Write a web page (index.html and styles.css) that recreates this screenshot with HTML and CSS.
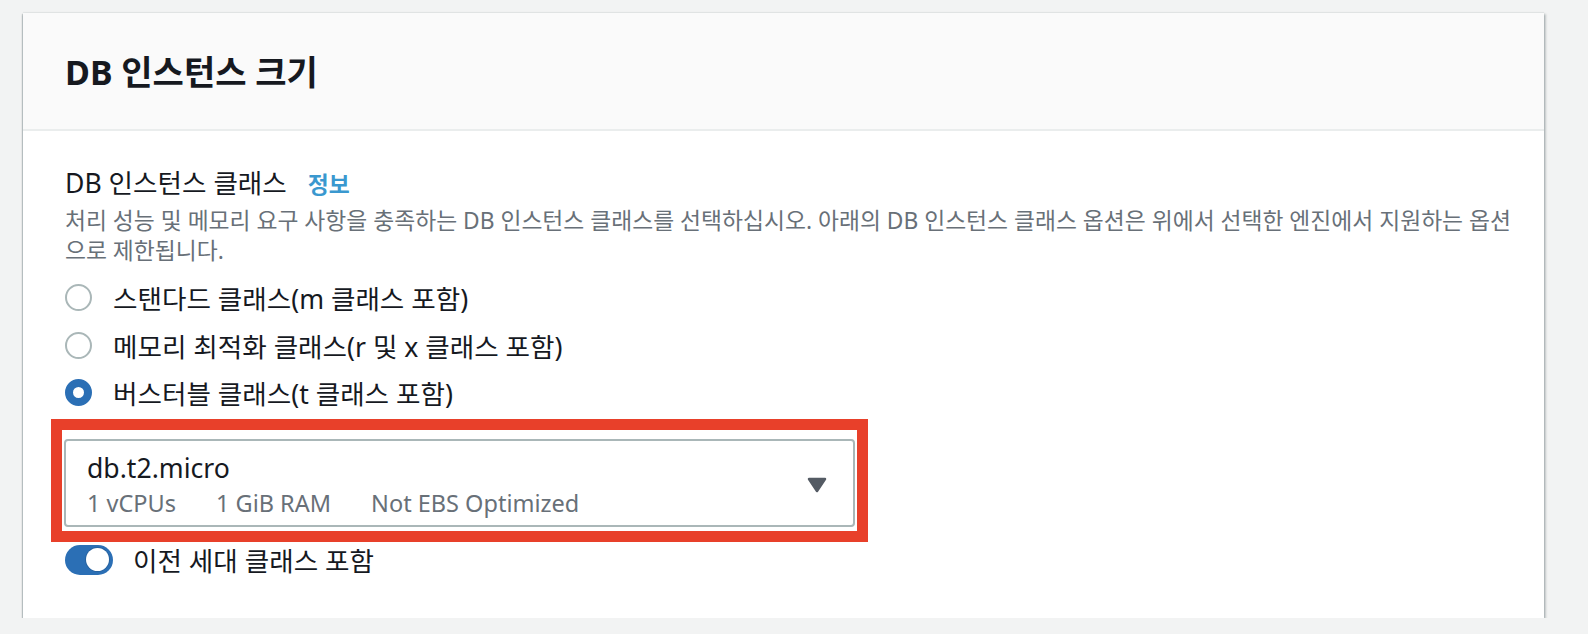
FILE: index.html
```html
<!DOCTYPE html>
<html lang="ko">
<head>
<meta charset="utf-8">
<title>DB 인스턴스 크기</title>
<link rel="stylesheet" href="styles.css">
</head>
<body>
<section class="card">
  <header class="card-header">
    <h2 class="card-title">DB 인스턴스 크기</h2>
  </header>
  <div class="card-body">
    <div class="field-label">
      <span class="label-text">DB 인스턴스 클래스</span>
      <a class="info-link">정보</a>
    </div>
    <p class="field-desc">처리 성능 및 메모리 요구 사항을 충족하는 DB 인스턴스 클래스를 선택하십시오. 아래의 DB 인스턴스 클래스 옵션은 위에서 선택한 엔진에서 지원하는 옵션<br>으로 제한됩니다.</p>
    <div class="radio-group">
      <label class="radio-row"><span class="radio"></span><span class="radio-label">스탠다드 클래스(m 클래스 포함)</span></label>
      <label class="radio-row"><span class="radio"></span><span class="radio-label">메모리 최적화 클래스(r 및 x 클래스 포함)</span></label>
      <label class="radio-row"><span class="radio radio-checked"></span><span class="radio-label">버스터블 클래스(t 클래스 포함)</span></label>
    </div>
    <div class="highlight">
      <div class="select">
        <div class="select-text">
          <div class="select-value">db.t2.micro</div>
          <div class="select-tags">
            <span>1 vCPUs</span>
            <span>1 GiB RAM</span>
            <span>Not EBS Optimized</span>
          </div>
        </div>
        <svg class="caret" width="20" height="16" viewBox="0 0 20 16"><path d="M2 2 H18 L10 14 Z" fill="#545b64" stroke="#545b64" stroke-width="2.5" stroke-linejoin="round"/></svg>
      </div>
    </div>
    <div class="toggle-row">
      <span class="toggle"><span class="knob"></span></span>
      <span class="toggle-label">이전 세대 클래스 포함</span>
    </div>
  </div>
</section>
</body>
</html>
```
FILE: styles.css
```css
html, body {
  margin: 0;
  padding: 0;
}
body {
  background: #f2f3f3;
  padding: 13px 0 0 23px;
  font-family: "Noto Sans", "Noto Sans CJK KR", sans-serif;
  color: #16191f;
}
.card {
  width: 1521px;
  height: 605px;
  background: #ffffff;
  box-shadow: 0 2px 2px 0 rgba(0, 28, 36, 0.35), 2px 1px 2px 0 rgba(0, 28, 36, 0.18), -1px 1px 1px 0 rgba(0, 28, 36, 0.15), 0 -1px 1px 0 rgba(0, 28, 36, 0.06);
}
.card-header {
  background: #fafafa;
  border-bottom: 2px solid #eaeded;
  display: flex;
  align-items: center;
  padding: 2px 42px 0 42px;
  box-sizing: border-box;
  height: 118px;
}
.card-title {
  margin: 0;
  font-size: 34px;
  font-weight: 700;
  line-height: 40px;
}
.card-body {
  padding: 35px 42px 0 42px;
}
.field-label {
  display: flex;
  align-items: baseline;
  line-height: 34px;
}
.label-text {
  font-size: 26.6px;
}
.info-link {
  margin-left: 21px;
  font-size: 22.8px;
  font-weight: 700;
  color: #3a98cf;
}
.field-desc {
  margin: 4px 0 0 0;
  font-size: 22.8px;
  line-height: 30px;
  color: #687078;
  white-space: nowrap;
}
.radio-group {
  margin-top: 8px;
  display: flex;
  flex-direction: column;
}
.radio-row {
  height: 47.5px;
  display: flex;
  align-items: center;
}
.radio {
  width: 27px;
  height: 27px;
  box-sizing: border-box;
  border-radius: 50%;
  border: 2.5px solid #aab7b8;
  background: #fff;
  flex: none;
}
.radio-checked {
  border: 8.5px solid #2b6fb5;
}
.radio-label {
  margin-left: 21px;
  font-size: 26.6px;
}
.highlight {
  margin-top: 2px;
  margin-left: -14px;
  width: 817px;
  box-sizing: border-box;
  border: 11px solid #e8402a;
  padding: 9px 2px 4px 2px;
}
.select {
  height: 88px;
  box-sizing: border-box;
  border: 2px solid #aab7b8;
  border-radius: 4px;
  padding: 10px 26px 7px 21px;
  display: flex;
  align-items: center;
  justify-content: space-between;
}
.select-value {
  font-size: 26.6px;
  line-height: 34px;
  color: #16191f;
}
.select-tags {
  margin-top: 3px;
  font-size: 23.5px;
  line-height: 30px;
  color: #687078;
  display: flex;
  gap: 40px;
}
.caret {
  display: block;
  margin-top: 2px;
}
.toggle-row {
  margin-top: 3px;
  height: 30px;
  display: flex;
  align-items: center;
}
.toggle {
  width: 48px;
  height: 30px;
  border-radius: 15px;
  background: #2b6fb5;
  display: flex;
  align-items: center;
  justify-content: flex-end;
  padding-right: 4px;
  box-sizing: border-box;
  flex: none;
}
.knob {
  width: 23px;
  height: 23px;
  border-radius: 50%;
  background: #ffffff;
  box-shadow: 0 0 0 1px rgba(0, 0, 0, 0.12);
}
.toggle-label {
  margin-left: 20px;
  font-size: 26.6px;
}
```
